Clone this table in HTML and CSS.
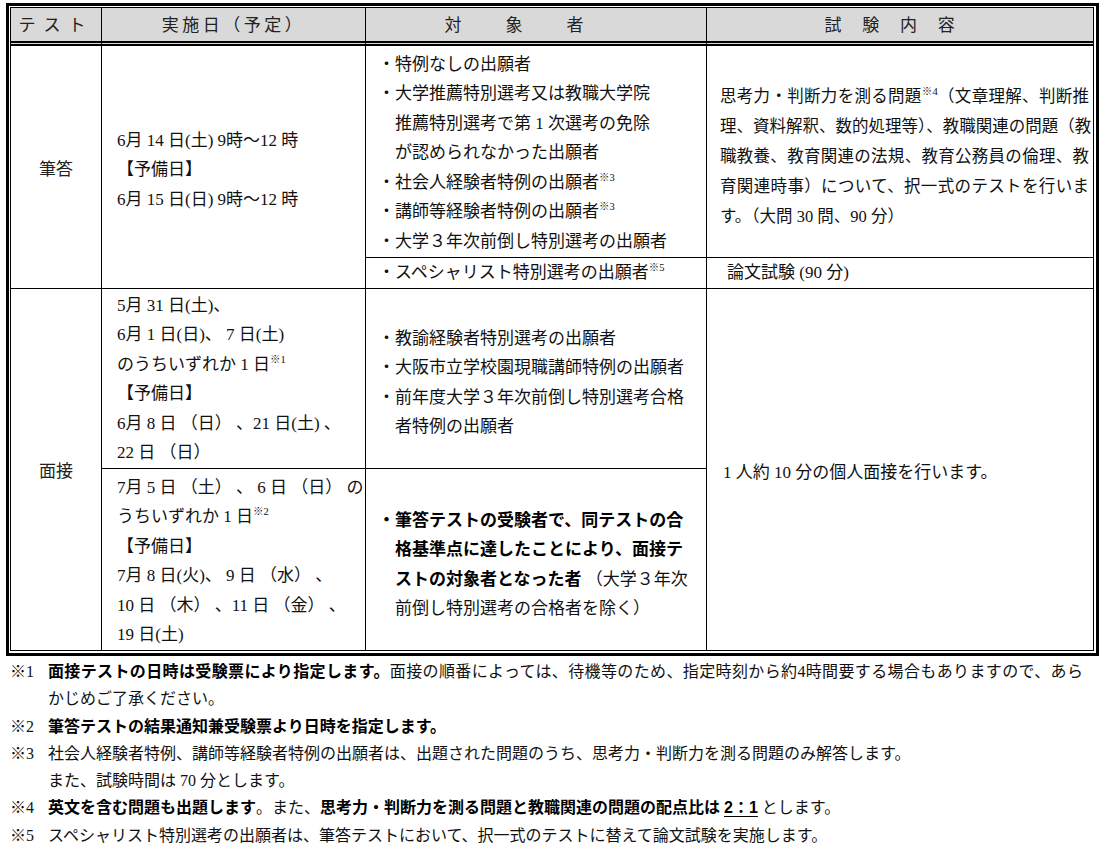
FILE: index.html
```html
<!DOCTYPE html>
<html lang="ja">
<head>
<meta charset="utf-8">
<title>試験日程</title>
<link rel="stylesheet" href="styles.css">
</head>
<body>
<div class="frame">
<table class="sched">
<colgroup><col class="c1"><col class="c2"><col class="c3"><col class="c4"></colgroup>
<thead>
<tr class="rh">
<th class="h1">テスト</th>
<th class="h2">実施日（予定）</th>
<th class="h3">対象者</th>
<th class="h4">試験内容</th>
</tr>
</thead>
<tbody>
<tr class="r1a">
<td class="kind" rowspan="2">筆答</td>
<td class="date" rowspan="2">
<div>6月 14 日(土) 9時～12 時</div>
<div>【予備日】</div>
<div>6月 15 日(日) 9時～12 時</div>
</td>
<td class="who">
<div class="li">・特例なしの出願者</div>
<div class="li">・大学推薦特別選考又は教職大学院<br>推薦特別選考で第 1 次選考の免除<br>が認められなかった出願者</div>
<div class="li">・社会人経験者特例の出願者<span class="sup">※3</span></div>
<div class="li">・講師等経験者特例の出願者<span class="sup">※3</span></div>
<div class="li">・大学３年次前倒し特別選考の出願者</div>
</td>
<td class="what">
<span class="jl">思考力・判断力を測る問題<span class="sup">※4</span>（文章理解、判断推</span>
<span class="jl">理、資料解釈、数的処理等）、教職関連の問題（教</span>
<span class="jl">職教養、教育関連の法規、教育公務員の倫理、教</span>
<span class="jl">育関連時事）について、択一式のテストを行いま</span>
<span class="ln">す。（大問 30 問、90 分）</span>
</td>
</tr>
<tr class="r1b">
<td class="who">
<div class="li">・スペシャリスト特別選考の出願者<span class="sup">※5</span></div>
</td>
<td class="what short">論文試験 (90 分)</td>
</tr>
<tr class="r2a">
<td class="kind" rowspan="2">面接</td>
<td class="date">
<div>5月 31 日(土)、</div>
<div>6月 1 日(日)、 7 日(土)</div>
<div>のうちいずれか 1 日<span class="sup">※1</span></div>
<div>【予備日】</div>
<div>6月 8 日 （日） 、21 日(土) 、</div>
<div>22 日 （日）</div>
</td>
<td class="who">
<div class="li">・教諭経験者特別選考の出願者</div>
<div class="li">・大阪市立学校園現職講師特例の出願者</div>
<div class="li">・前年度大学３年次前倒し特別選考合格<br>者特例の出願者</div>
</td>
<td class="what single" rowspan="2">1 人約 10 分の個人面接を行います。</td>
</tr>
<tr class="r2b">
<td class="date">
<div>7月 5 日 （土） 、 6 日 （日） の</div>
<div>うちいずれか 1 日<span class="sup">※2</span></div>
<div>【予備日】</div>
<div>7月 8 日(火)、 9 日 （水） 、</div>
<div>10 日 （木） 、11 日 （金） 、</div>
<div>19 日(土)</div>
</td>
<td class="who">
<div class="li"><b>・筆答テストの受験者で、同テストの合<br>格基準点に達したことにより、面接テ<br>ストの対象者となった者</b> （大学３年次<br>前倒し特別選考の合格者を除く）</div>
</td>
</tr>
</tbody>
</table>
</div>

<div class="notes">
<div class="note"><span class="mk">※1</span><div class="tx"><span class="jl"><b>面接テストの日時は受験票により指定します。</b>面接の順番によっては、待機等のため、指定時刻から約4時間要する場合もありますので、あら</span><span class="ln">かじめご了承ください。</span></div></div>
<div class="note"><span class="mk">※2</span><div class="tx"><b>筆答テストの結果通知兼受験票より日時を指定します。</b></div></div>
<div class="note"><span class="mk">※3</span><div class="tx"><span class="ln">社会人経験者特例、講師等経験者特例の出願者は、出題された問題のうち、思考力・判断力を測る問題のみ解答します。</span><span class="ln">また、試験時間は 70 分とします。</span></div></div>
<div class="note"><span class="mk">※4</span><div class="tx"><b>英文を含む問題も出題します</b>。また、<b>思考力・判断力を測る問題と教職関連の問題の配点比は</b> <b class="ratio">2：1</b> とします。</div></div>
<div class="note"><span class="mk">※5</span><div class="tx">スペシャリスト特別選考の出願者は、筆答テストにおいて、択一式のテストに替えて論文試験を実施します。</div></div>
</div>
</body>
</html>
```

FILE: styles.css
```css
* {
  box-sizing: border-box;
}

body {
  margin: 0;
  background: #fff;
  color: #111;
  font-family: "Liberation Serif", "Noto Sans CJK JP", serif;
  font-size: 17px;
}

b {
  font-family: "Liberation Sans", "Noto Sans CJK JP", sans-serif;
  font-weight: 700;
  color: #000;
}

.frame {
  width: 1093px;
  margin: 3px 0 0 6px;
  border: 3px solid #000;
  padding: 1px 2px 2px 1px;
}

.sched {
  width: 1084px;
  border-collapse: separate;
  border-spacing: 0;
  table-layout: fixed;
  border-top: 1px solid #000;
  border-left: 1px solid #000;
}

.c1 { width: 91px; }
.c2 { width: 264px; }
.c3 { width: 341px; }
.c4 { width: 387px; }

.sched th,
.sched td {
  border-right: 1px solid #000;
  border-bottom: 1px solid #000;
  padding: 0;
  line-height: 29.5px;
  vertical-align: middle;
  text-align: left;
}

.sched th {
  background: #d9d9d9;
  border-bottom: 5px double #000;
  font-weight: normal;
  color: #222;
  text-align: center;
  padding-top: 3px;
  white-space: nowrap;
}

.rh { height: 38px; }
.r1a { height: 212px; }
.r1b { height: 31px; }
.r2a { height: 180px; }
.r2b { height: 182px; }

.h1 { letter-spacing: 8px; }
.h2 { letter-spacing: 3.5px; }
.h3 { letter-spacing: 44px; padding-left: 44px; }
.h4 { letter-spacing: 20.7px; padding-left: 20.7px; }

.sched td.kind {
  text-align: center;
  color: #222;
  padding-top: 6px;
}

.sched .r2a td.kind {
  padding-top: 4px;
}

.sched td.date {
  padding-left: 15px;
  padding-top: 6px;
  white-space: nowrap;
}

.sched .r2a td.date {
  padding-top: 1px;
}

.sched .r2b td.date {
  padding-top: 3px;
}

.sched td.who {
  padding-left: 12px;
  padding-top: 3px;
  white-space: nowrap;
}

.sched .r1b td.who {
  padding-top: 0;
}

.sched .r2a td.who {
  padding-top: 8px;
}

.sched .r2b td.who {
  padding-top: 10px;
}

.li {
  padding-left: 17px;
  text-indent: -17px;
}

.sched td.what {
  padding: 10px 4px 0 13px;
  font-size: 16.5px;
  line-height: 30px;
}

.sched td.what.short {
  padding: 0 4px 0 20px;
  font-size: 17px;
  line-height: 29.5px;
}

.sched td.what.single {
  padding: 6px 4px 0 16px;
  font-size: 17px;
  line-height: 29.5px;
}

.jl {
  display: block;
  white-space: nowrap;
  text-align: justify;
  text-align-last: justify;
}

.ln {
  display: block;
}

.sup {
  font-size: 10.5px;
  line-height: 0;
  vertical-align: 7px;
  font-family: "Liberation Serif", "Noto Sans CJK JP", serif;
  font-weight: normal;
}

.notes {
  margin: 2px 0 0 10px;
  width: 1073px;
  font-size: 16px;
  line-height: 27.3px;
}

.note {
  display: flex;
}

.mk {
  flex: none;
  width: 38px;
}

.tx {
  flex: 1;
  min-width: 0;
}

.ratio {
  text-decoration: underline;
  text-underline-offset: 3px;
}
```
